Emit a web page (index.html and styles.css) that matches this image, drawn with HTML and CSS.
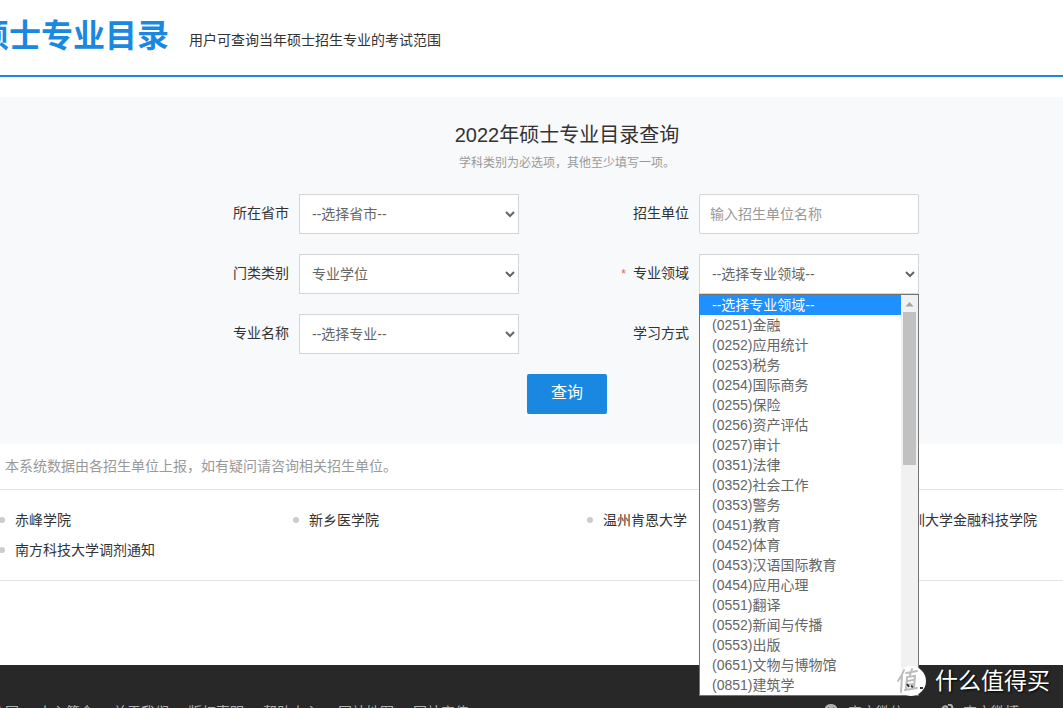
FILE: index.html
```html
<!DOCTYPE html>
<html lang="zh-CN">
<head>
<meta charset="utf-8">
<title>硕士专业目录</title>
<link rel="stylesheet" href="styles.css">
</head>
<body>
<header class="header">
  <div class="container header-row">
    <h1 class="header-title">硕士专业目录</h1>
    <p class="header-desc">用户可查询当年硕士招生专业的考试范围</p>
  </div>
</header>
<main>
  <section class="search">
    <div class="container">
      <h2 class="search-title">2022年硕士专业目录查询</h2>
      <p class="search-tip">学科类别为必选项，其他至少填写一项。</p>
      <form class="search-form">
        <div class="fields">
          <div class="field">
            <label for="province">所在省市</label>
            <select class="control" id="province"><option>--选择省市--</option></select>
          </div>
          <div class="field">
            <label for="unit">招生单位</label>
            <input class="control" id="unit" type="text" placeholder="输入招生单位名称">
          </div>
          <div class="field">
            <label for="category">门类类别</label>
            <select class="control" id="category"><option>专业学位</option></select>
          </div>
          <div class="field field-open">
            <label for="domain"><span class="required">*</span>专业领域</label>
            <select class="control" id="domain"><option>--选择专业领域--</option></select>
            <div class="menu">
              <ul class="menu-list" role="listbox" aria-label="专业领域">
                <li class="option selected" role="option" aria-selected="true">--选择专业领域--</li>
                <li class="option" role="option">(0251)金融</li>
                <li class="option" role="option">(0252)应用统计</li>
                <li class="option" role="option">(0253)税务</li>
                <li class="option" role="option">(0254)国际商务</li>
                <li class="option" role="option">(0255)保险</li>
                <li class="option" role="option">(0256)资产评估</li>
                <li class="option" role="option">(0257)审计</li>
                <li class="option" role="option">(0351)法律</li>
                <li class="option" role="option">(0352)社会工作</li>
                <li class="option" role="option">(0353)警务</li>
                <li class="option" role="option">(0451)教育</li>
                <li class="option" role="option">(0452)体育</li>
                <li class="option" role="option">(0453)汉语国际教育</li>
                <li class="option" role="option">(0454)应用心理</li>
                <li class="option" role="option">(0551)翻译</li>
                <li class="option" role="option">(0552)新闻与传播</li>
                <li class="option" role="option">(0553)出版</li>
                <li class="option" role="option">(0651)文物与博物馆</li>
                <li class="option" role="option">(0851)建筑学</li>
              </ul>
              <div class="scrollbar" aria-hidden="true">
                <svg class="scroll-arrow" width="17" height="17" viewBox="0 0 17 17"><path d="M4.500 11.500h8l-4-4.500z" fill="#a3a3a3"/></svg>
                <div class="scroll-thumb"></div>
              </div>
            </div>
          </div>
          <div class="field">
            <label for="major">专业名称</label>
            <select class="control" id="major"><option>--选择专业--</option></select>
          </div>
          <div class="field">
            <label for="mode">学习方式</label>
            <select class="control" id="mode"><option></option></select>
          </div>
        </div>
        <button class="submit" type="button">查询</button>
      </form>
    </div>
  </section>
  <p class="container notice">本系统数据由各招生单位上报，如有疑问请咨询相关招生单位。</p>
  <section class="news">
    <ul class="container news-list">
      <li><a href="#">赤峰学院</a></li>
      <li><a href="#">新乡医学院</a></li>
      <li><a href="#">温州肯恩大学</a></li>
      <li><a href="#">深圳大学金融科技学院</a></li>
      <li><a href="#">南方科技大学调剂通知</a></li>
    </ul>
  </section>
</main>
<footer class="footer">
  <div class="container footer-row">
    <nav class="footer-links">
      <a href="#">学信网</a>
      <a href="#">中心简介</a>
      <a href="#">关于我们</a>
      <a href="#">版权声明</a>
      <a href="#">帮助中心</a>
      <a href="#">网站地图</a>
      <a href="#">网站宣传</a>
    </nav>
    <div class="footer-social">
      <a href="#"><svg width="16" height="16" viewBox="0 0 16 16"><path fill="#b0b0b0" fill-rule="evenodd" d="M8 0c3.900 0 6.500 2.600 6.500 6S11.900 12 8 12l-4 2 .5-3C2.600 10 1.500 8.200 1.500 6c0-3.400 2.600-6 6.500-6zM5.500 3.500a1 1 0 1 0 0 2 1 1 0 0 0 0-2zm5 0a1 1 0 1 0 0 2 1 1 0 0 0 0-2z"/></svg>官方微信</a>
      <a href="#"><svg width="16" height="16" viewBox="0 0 16 16" fill="none" stroke="#b0b0b0" stroke-width="2"><ellipse cx="7" cy="9" rx="5.500" ry="4"/><path d="M4 5c1-2 4-4 5-2v2M10 1c3-1 5 1 4 4"/></svg>官方微博</a>
    </div>
  </div>
</footer>
<div class="watermark">
  <svg width="32" height="32" viewBox="0 0 32 32" aria-hidden="true">
    <circle cx="17" cy="16" r="15" fill="#fff"/>
    <g fill="none" stroke="#bdbdbd" stroke-width="2" stroke-linecap="round">
      <path d="M10 5Q8 11 4 16M8 11L7 27M12 8l11-2M18 4l-2 6M13 12l-1 12M13 12l8-1-1 12M14 16l5-1M13 20l6-1M11 25l12-2"/>
    </g>
    <path d="M13 19l2 3M17 21l2 1M26 23h3" stroke="#333" stroke-width="2"/>
  </svg>
  <span>什么值得买</span>
</div>
</body>
</html>
```
FILE: styles.css
```css
* {
  box-sizing: border-box;
}

body {
  position: relative;
  display: flex;
  flex-direction: column;
  height: 100vh;
  margin: 0;
  overflow: hidden;
  background: #fff;
  color: #333;
  font: 14px/20px "Liberation Sans", "Noto Sans CJK SC", sans-serif;
}

h1, h2, p, ul {
  margin: 0;
  padding: 0;
}

ul {
  list-style: none;
}

a {
  color: inherit;
  text-decoration: none;
}

.container {
  margin: 0 -94px 0 -23px;
}

.header {
  flex: none;
  border-bottom: 2px solid #1a88e1;
}

.header-row {
  display: flex;
  align-items: center;
  gap: 20px;
  height: 75px;
}

.header-title {
  color: #1a88e1;
  font-size: 32px;
  line-height: 40px;
  padding-bottom: 4px;
}

.header-desc {
  padding-top: 4px;
}

main {
  flex: none;
  padding-top: 20px;
}

.search {
  padding: 24px 0 30px;
  background: #f8f9fb;
  text-align: center;
}

.search-title {
  font-size: 20px;
  font-weight: 400;
  line-height: 28px;
}

.search-tip {
  padding-top: 4px;
  color: #999;
  font-size: 12px;
}

.search-form {
  display: flex;
  flex-direction: column;
  align-items: center;
  gap: 20px;
  padding-top: 21px;
}

.fields {
  display: grid;
  grid-template-columns: auto auto;
  gap: 20px 96px;
}

.field {
  display: flex;
  align-items: center;
  gap: 10px;
}

.field label {
  width: 74px;
  padding-bottom: 2px;
  text-align: right;
}

.field-open {
  position: relative;
}

.required {
  margin-right: 7px;
  color: #e9604f;
  font-size: 12px;
}

.control {
  width: 220px;
  height: 40px;
  padding: 0 0 0 8px;
  border: 1px solid #d3d5d7;
  border-radius: 0;
  background: #fff;
  color: #666;
  font: inherit;
}

input.control {
  padding: 0 10px;
  border-radius: 2px;
}

.control::placeholder {
  color: #999;
}

.menu {
  position: absolute;
  z-index: 2;
  top: 100%;
  right: 0;
  display: flex;
  width: 220px;
  border: 1px solid #737373;
  background: #fff;
  color: #666;
  text-align: left;
}

.menu-list {
  flex: 1;
}

.option {
  padding-left: 12px;
}

.option.selected {
  background: #1e90ff;
  color: #fff;
}

.scrollbar {
  width: 17px;
  background: #f1f1f1;
}

.scroll-arrow {
  display: block;
}

.scroll-thumb {
  height: 153px;
  margin: 0 2px;
  background: #c1c1c1;
}

.submit {
  width: 80px;
  height: 40px;
  padding: 0 0 2px;
  border: 0;
  border-radius: 2px;
  background: #1a88e1;
  color: #fff;
  font: inherit;
  font-size: 16px;
}

.notice {
  padding: 12px 28px 13px;
  color: #999;
}

.news {
  border: solid #e4e4e4;
  border-width: 1px 0;
}

.news-list {
  display: grid;
  grid-template-columns: repeat(4, 294px);
  padding: 15px 0 15px 22px;
  line-height: 30px;
}

.news-list li {
  display: flex;
  align-items: center;
  gap: 10px;
}

.news-list li::before {
  width: 6px;
  height: 6px;
  border-radius: 50%;
  background: #ccc;
  content: "";
}

.footer {
  flex: 1;
  margin-top: 84px;
  padding-top: 37px;
  background: #282828;
  color: #b0b0b0;
  white-space: nowrap;
}

.footer-row {
  display: flex;
  justify-content: space-between;
  padding-right: 138px;
}

.footer-links {
  display: flex;
  gap: 19px;
}

.footer-social {
  display: flex;
  gap: 34px;
}

.footer-social a {
  display: flex;
  align-items: center;
  gap: 9px;
}

.watermark {
  position: absolute;
  z-index: 3;
  right: 13px;
  bottom: 11px;
  display: flex;
  align-items: center;
  gap: 9px;
  color: #fff;
  font-size: 23px;
  line-height: 32px;
  text-shadow: 1px 1px 2px #000;
}
```
